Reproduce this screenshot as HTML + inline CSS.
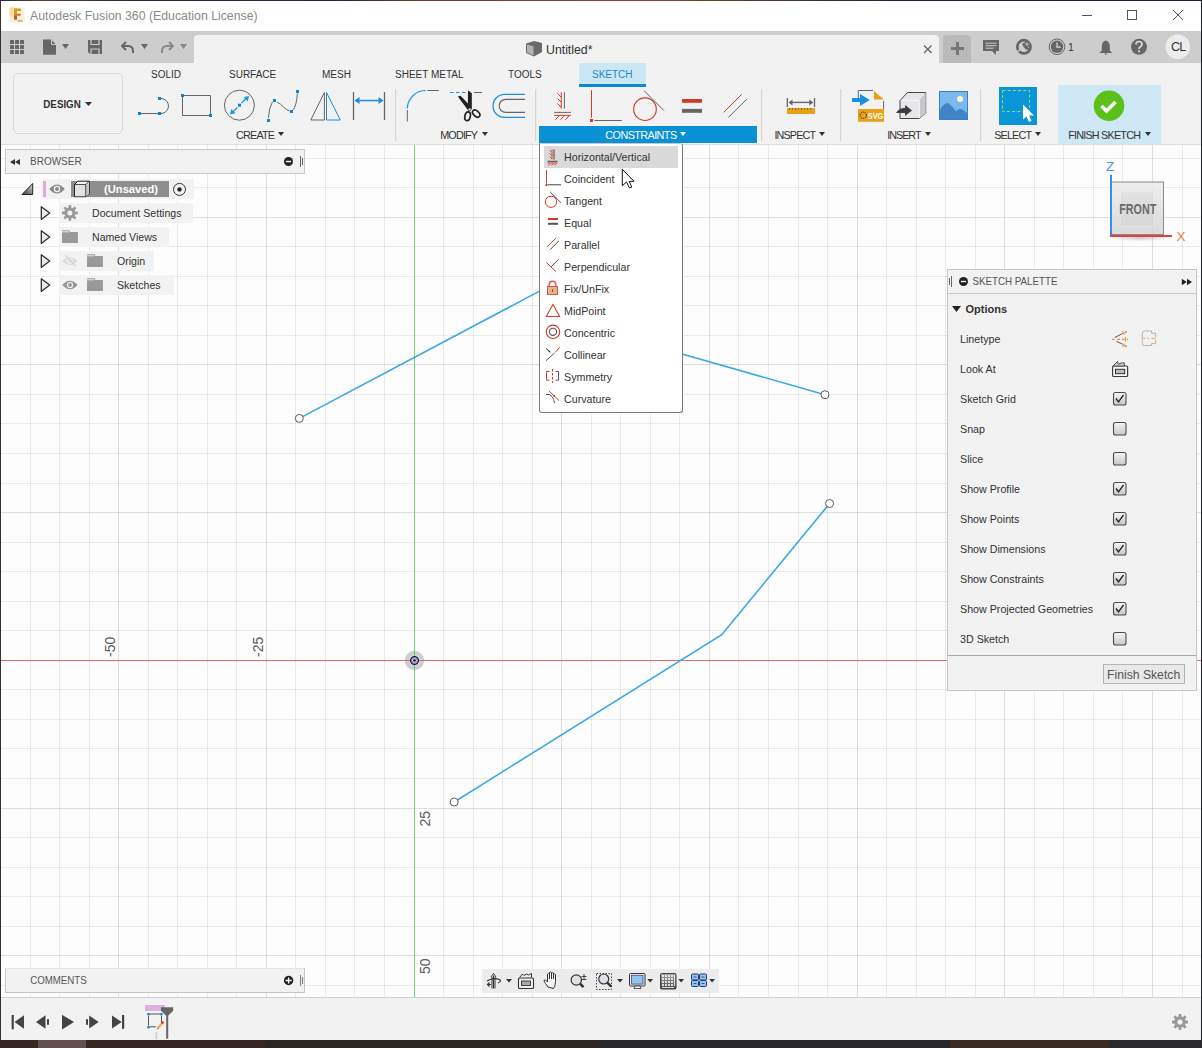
<!DOCTYPE html>
<html><head><meta charset="utf-8">
<style>
*{box-sizing:border-box;margin:0;padding:0}
html,body{width:1202px;height:1048px;overflow:hidden;background:#fff;font-family:"Liberation Sans",sans-serif;color:#333}
.a{position:absolute}
.t{position:absolute;white-space:nowrap;line-height:1}
svg{position:absolute;overflow:visible}
</style></head><body>
<!-- window edges -->
<div class="a" style="left:0;top:0;width:1202px;height:1048px;background:#fff"></div>
<div class="a" style="left:0;top:0;width:1202px;height:1px;background:linear-gradient(90deg,#1e2444 0%,#6a4030 3%,#2a2a40 10%,#1e2444 28%,#7a3a2a 35%,#8a4530 55%,#5a3a30 62%,#1e2040 75%,#1c1c38 100%)"></div>
<div class="a" style="left:0;top:0;width:1px;height:1048px;background:#3a2e28"></div>
<div class="a" style="left:1201px;top:0;width:1px;height:1048px;background:#1e1e30"></div>
<div class="a" style="left:0;top:1040px;width:1202px;height:8px;background:#2e2420"></div>
<div class="a" style="left:38px;top:1040px;width:20px;height:8px;background:#5a4a48"></div>

<!-- title bar -->
<div id="title" class="a" style="left:1px;top:1px;width:1200px;height:30px;background:#fff"></div>
<div class="t" style="left:30px;top:10px;font-size:12.3px;color:#8a8a8a">Autodesk Fusion 360 (Education License)</div>

<!-- tab bar -->
<div class="a" style="left:1px;top:31px;width:1200px;height:32px;background:#cdcdcd"></div>
<div class="a" style="left:194px;top:35px;width:745px;height:28px;background:#f2f2f2;border-radius:4px 4px 0 0"></div>
<div class="a" style="left:943px;top:35px;width:28px;height:28px;background:#b9b9b9;border-radius:4px 4px 0 0"></div>
<div class="t" style="left:546px;top:44px;font-size:12.3px;color:#333">Untitled*</div>
<svg style="left:0;top:0" width="1202" height="64" viewBox="0 0 1202 64">
 <!-- title logo -->
 <rect x="9.5" y="7.5" width="15" height="15" fill="#f8f0da"/>
 <rect x="9.5" y="7.5" width="4" height="9" fill="#f6dba6"/>
 <rect x="14" y="8.5" width="3" height="11" fill="#e0922c"/>
 <rect x="14" y="15.5" width="3" height="4" fill="#c05a30"/>
 <path d="M14 8.5 h6 q1.2 0 1.2 1.3 q0 1.2 -1.2 1.2 h-6z" fill="#e39a26"/>
 <rect x="17" y="13.8" width="3.6" height="1.8" fill="#c8602e"/>
 <rect x="17.5" y="19.8" width="5" height="2" fill="#eeb070"/>
 <!-- window controls -->
 <g stroke="#555" stroke-width="1" fill="none" shape-rendering="crispEdges">
  <path d="M1082 15.5 h10"/>
  <rect x="1127.5" y="10.5" width="9" height="9"/>
 </g>
 <path d="M1173 10 l10 10 M1183 10 l-10 10" stroke="#555" stroke-width="1"/>
 <!-- grid icon -->
 <g fill="#666">
  <rect x="10" y="40" width="4" height="4" rx=".6"/><rect x="15" y="40" width="4" height="4" rx=".6"/><rect x="20" y="40" width="4" height="4" rx=".6"/>
  <rect x="10" y="45" width="4" height="4" rx=".6"/><rect x="15" y="45" width="4" height="4" rx=".6"/><rect x="20" y="45" width="4" height="4" rx=".6"/>
  <rect x="10" y="50" width="4" height="4" rx=".6"/><rect x="15" y="50" width="4" height="4" rx=".6"/><rect x="20" y="50" width="4" height="4" rx=".6"/>
 </g>
 <!-- file -->
 <path d="M43 39.5 h8 l5 5 v10.2 h-13z" fill="#666"/>
 <path d="M51.5 39.5 v5 h4.5" fill="none" stroke="#cdcdcd" stroke-width="1"/>
 <path d="M62 44 h7 l-3.5 5z" fill="#666"/>
 <!-- save -->
 <path d="M88 40 h14 v14 h-12 l-2 -2z" fill="#666"/>
 <path d="M91 40 v4.5 h8 v-4.5 M91 54 v-5 h8 v5" fill="none" stroke="#cdcdcd" stroke-width="1.2"/>
 <!-- undo -->
 <path d="M133 53 v-2 q0 -5 -5 -5 h-5.5 M126 42 l-4 4 l4 4" fill="none" stroke="#666" stroke-width="2"/>
 <path d="M141 44 h7 l-3.5 5z" fill="#666"/>
 <!-- redo -->
 <path d="M162 53 v-2 q0 -5 5 -5 h5.5 M169 42 l4 4 l-4 4" fill="none" stroke="#888" stroke-width="2"/>
 <path d="M180 44 h7 l-3.5 5z" fill="#888"/>
 <!-- doc tab cube -->
 <path d="M526 43.5 l8 -2.5 l8 2 v9 l-8 4.5 l-8 -3.5z" fill="#6a6a6a"/>
 <path d="M527 44.5 l6.5 2 v9 l-6.5 -3z" fill="#b4b4b8"/>
 <!-- close x -->
 <path d="M924 45.5 l7.5 7.5 M931.5 45.5 l-7.5 7.5" stroke="#666" stroke-width="1.3"/>
 <!-- plus -->
 <path d="M951 48.5 h13 M957.5 42 v13" stroke="#777" stroke-width="3"/>
 <!-- comment -->
 <path d="M983 40 h16 v11 h-3 v4 l-4 -4 h-9z" fill="#666"/>
 <path d="M985.5 43.2 h11 M985.5 45.7 h11 M985.5 48.2 h8" stroke="#cdcdcd" stroke-width="1"/>
 <!-- sync -->
 <circle cx="1023.9" cy="46.8" r="6.6" fill="none" stroke="#666" stroke-width="2.7"/>
 <path d="M1022.8 43.6 l2.4 2.4 l-0.6 0.6 l1.6 1.6 l0.6 -0.6 l2.2 2.2" fill="none" stroke="#666" stroke-width="2.2"/>
 <path d="M1024.6 44 l2.8 -2.8 M1027 46.6 l2.8 -2.8" stroke="#666" stroke-width="2.2"/>
 <path d="M1025.3 44.2 l2.2 -2.2 M1027.2 46.2 l2.2 -2.2" stroke="#cdcdcd" stroke-width=".7"/>
 <path d="M1016.5 52.3 l4 -3.2" stroke="#cdcdcd" stroke-width="1.4"/>
 <!-- clock -->
 <circle cx="1057" cy="46.8" r="7.8" fill="none" stroke="#666" stroke-width="1"/>
 <circle cx="1057" cy="46.8" r="6.2" fill="#666"/>
 <path d="M1057 42.5 v4.6 h3.6" fill="none" stroke="#e0e0e0" stroke-width="1.2"/>
 <!-- bell -->
 <path d="M1105.8 39 v1.5 q-4 1 -4 6 v4 l-2.5 2.5 h13 l-2.5 -2.5 v-4 q0 -5 -4 -6z M1104 53.5 h3.6 l-1.8 1.5z" fill="#666"/>
 <!-- help -->
 <circle cx="1139" cy="46.8" r="8" fill="#666"/>
 <path d="M1136 44.5 q0 -3 3 -3 q3 0 3 2.8 q0 1.6 -1.6 2.4 q-1.4 .8 -1.4 2.4" fill="none" stroke="#ddd" stroke-width="1.7"/>
 <rect x="1138.1" y="50.3" width="1.8" height="1.9" fill="#ddd"/>
 <!-- avatar -->
 <circle cx="1177.8" cy="46.8" r="12.3" fill="#ececec"/>
</svg>
<div class="t" style="left:1068px;top:42px;font-size:10.5px;color:#333">1</div>
<div class="t" style="left:1171px;top:41px;font-size:12.5px;color:#333;letter-spacing:-0.8px">CL</div>

<!-- toolbar -->
<div class="a" style="left:1px;top:63px;width:1200px;height:82px;background:#f2f2f2"></div>
<div class="a" style="left:1px;top:144px;width:1200px;height:1px;background:#dedede"></div>
<div class="a" style="left:13px;top:73px;width:110px;height:61px;border:1px solid #d9d9d9;border-radius:5px;background:#f2f2f2"></div>

<!-- tabs -->
<div class="a" style="left:579px;top:63px;width:67px;height:24px;background:#cde6f4"></div>
<div class="a" style="left:579px;top:84px;width:67px;height:3px;background:#0a8ad6"></div>
<div class="t" style="left:151px;top:70px;font-size:10px;color:#333">SOLID</div>
<div class="t" style="left:229px;top:70px;font-size:10px;color:#333">SURFACE</div>
<div class="t" style="left:322px;top:70px;font-size:10px;color:#333">MESH</div>
<div class="t" style="left:395px;top:70px;font-size:10px;color:#333">SHEET METAL</div>
<div class="t" style="left:508px;top:70px;font-size:10px;color:#333">TOOLS</div>
<div class="t" style="left:592px;top:70px;font-size:10px;color:#1a86cc">SKETCH</div>
<!-- group labels -->
<div class="a" style="left:539px;top:126px;width:218px;height:17px;background:#0a90d4"></div>
<div class="a" style="left:1058px;top:85px;width:103px;height:59px;background:#cfe8f5"></div>







<svg style="left:0;top:60px" width="1202" height="90" viewBox="0 60 1202 90">
 <!-- dropdown arrows -->
 <g fill="#333">
  <path d="M85 102 h7 l-3.5 4z"/>
  <path d="M278 132 h6 l-3 4z"/>
  <path d="M482 132 h6 l-3 4z"/>
  <path d="M819 132 h6 l-3 4z"/>
  <path d="M925 132 h6 l-3 4z"/>
  <path d="M1035 132 h6 l-3 4z"/>
  <path d="M1145 132 h6 l-3 4z"/>
 </g>
 <path d="M680 132 h6 l-3 4z" fill="#fff"/>
 <!-- separators -->
 <g fill="#d6d6d6">
  <rect x="395" y="89" width="1.2" height="52"/>
  <rect x="535" y="89" width="1.2" height="52"/>
  <rect x="761" y="89" width="1.2" height="52"/>
  <rect x="840" y="89" width="1.2" height="52"/>
  <rect x="980" y="89" width="1.2" height="52"/>
 </g>
 <!-- CREATE: line -->
 <g fill="none" stroke="#666" stroke-width="1">
  <path d="M141 113.5 h17"/>
  <path d="M161 98.5 a7.5 7.5 0 0 1 0 15"/>
  <path d="M182.5 96 v19.5 h27 M183 95.5 h27.5 v19"/>
  <circle cx="239.4" cy="105.2" r="15"/>
  <path d="M268.4 118 q0.5 -10 4 -16 M277 102 q4 2 6.5 5 q3 3 6 4 M293 110 q3.5 -4 4.4 -16.5"/>
  <path d="M324.4 92.5 L310.8 120 H324.4z"/>
  <path d="M353.5 92 v28 M384.5 92 v28" stroke-width="1.3"/>
 </g>
 <g fill="#0a84d8">
  <rect x="138" y="112" width="3" height="3"/><rect x="158" y="112" width="3" height="3"/><rect x="158" y="97" width="3" height="3"/>
  <rect x="181" y="94" width="3" height="3"/><rect x="209" y="114" width="3" height="3"/>
  <rect x="238" y="103.7" width="3" height="3"/>
  <rect x="267" y="119" width="3" height="3"/><rect x="273" y="99" width="3" height="3"/><rect x="290" y="110" width="3" height="3"/><rect x="296" y="90" width="3" height="3"/>
 </g>
 <g stroke="#1a9ae0" stroke-width="1.4" fill="#1a9ae0">
  <path d="M241.5 103 l6 -6 M237.3 107.4 l-6 6" fill="none"/>
  <path d="M249 96 l-5.5 1.2 l4.3 4.3z M230 114.5 l5.5 -1.2 l-4.3 -4.3z" stroke="none"/>
 </g>
 <path d="M326.5 92.5 V120 H340.3z" fill="none" stroke="#1a8ee0" stroke-width="1"/>
 <g fill="#1a8ee0">
  <rect x="356" y="99.8" width="26" height="1.5"/>
  <path d="M354.5 100.5 l5 -3.5 v7z M383.5 100.5 l-5 -3.5 v7z"/>
 </g>
 <!-- MODIFY: fillet -->
 <path d="M407.3 110 v11.5 M427.3 90.5 h11.5" stroke="#666" stroke-width="1" fill="none"/>
 <path d="M407.3 108.5 A18.5 18.5 0 0 1 425.8 90.5" stroke="#1a9ae0" stroke-width="1.2" fill="none"/>
 <!-- trim -->
 <path d="M450 92.5 h16" stroke="#1a8ee0" stroke-width="1.2" stroke-dasharray="3.5 2.5" fill="none"/>
 <path d="M474 92.5 h8" stroke="#666" stroke-width="1" fill="none"/>
 <g fill="#222">
  <path d="M468 90.3 L471.8 93.2 V108.8 L470 111.5 L467.8 109.5z"/>
  <path d="M457.8 96.6 L460.6 95.8 L471 106.8 L469.6 111.2 L468 110.2z"/>
 </g>
 <circle cx="469.6" cy="109.4" r="1.1" fill="#f2f2f2"/>
 <g fill="none" stroke="#222" stroke-width="1.7">
  <ellipse cx="467.6" cy="116.3" rx="2.7" ry="4.5" transform="rotate(12 467.6 116.3)"/>
  <ellipse cx="476.2" cy="113.6" rx="2.6" ry="4.3" transform="rotate(-48 476.2 113.6)"/>
 </g>
 <!-- offset -->
 <path d="M525 94.4 h-20.5 a11.5 11.5 0 0 0 0 23 h20.5" stroke="#1a8ee0" stroke-width="1.3" fill="none"/>
 <path d="M525 99.3 h-19.3 a6.55 6.55 0 0 0 0 13.1 h19.3" stroke="#666" stroke-width="1.2" fill="none"/>
 <!-- CONSTRAINTS: H/V -->
 <path d="M564.4 92.3 v16.4 M554.1 112.4 h16.8" stroke="#666" stroke-width="1" fill="none"/>
 <g stroke="#d03a2a" stroke-width="1" fill="none">
  <path d="M561.3 92.3 v16.4 M557.5 93.5 l3.5 3.5 M557.5 98.5 l3.5 3.5 M557.5 103.5 l3.5 3.5"/>
  <path d="M554.1 115.4 h16.8 M559 115.8 l-3.5 4 M564 115.8 l-3.5 4 M569 115.8 l-3.5 4"/>
 </g>
 <!-- coincident -->
 <path d="M591.5 90.2 v27.6" stroke="#d03a2a" stroke-width="1" fill="none"/>
 <rect x="590" y="119" width="3" height="3" fill="#d03a2a"/>
 <path d="M594.3 120.5 h27.6" stroke="#666" stroke-width="1" fill="none"/>
 <!-- tangent -->
 <circle cx="645" cy="109.2" r="11.3" fill="none" stroke="#d03a2a" stroke-width="1.1"/>
 <path d="M644.2 90.8 L663.9 110.5" stroke="#666" stroke-width="1" fill="none"/>
 <!-- equal -->
 <rect x="682" y="99" width="20" height="3.8" fill="#d03a2a"/>
 <rect x="682" y="108.9" width="20" height="3.9" fill="#666"/>
 <!-- parallel -->
 <path d="M723.6 112.4 L741.7 94.3" stroke="#d03a2a" stroke-width="1" fill="none"/>
 <path d="M728.4 117.4 L746.7 99.3" stroke="#666" stroke-width="1" fill="none"/>
 <!-- INSPECT -->
 <path d="M787.3 98 v9 M814.5 98 v9" stroke="#666" stroke-width="1.3" fill="none"/>
 <rect x="790" y="101.7" width="22" height="1.4" fill="#666"/>
 <path d="M788.5 102.4 l4 -3 v6z M813.3 102.4 l-4 -3 v6z" fill="#666"/>
 <rect x="787" y="108" width="28" height="6" fill="#e8a218"/>
 <path d="M789.5 108 v2 M792.5 108 v1.5 M795.5 108 v2 M798.5 108 v1.5 M801.5 108 v2 M804.5 108 v1.5 M807.5 108 v2 M810.5 108 v1.5" stroke="#555" stroke-width="0.8"/>
 <!-- INSERT svg -->
 <path d="M858.3 101 V90.5 H873 M883.6 101 v8" stroke="#666" stroke-width="1" fill="none"/>
 <rect x="858.8" y="91" width="24.5" height="18" fill="#f2f2f2" opacity="0"/>
 <path d="M874 91 L884 99.5 H874z" fill="#e8a218"/>
 <rect x="858" y="109" width="26" height="12.8" fill="#e8a218"/>
 <circle cx="863.3" cy="115.3" r="3.2" fill="none" stroke="#222" stroke-width="1" stroke-dasharray="1.2 0.8"/>
 <text x="867.8" y="119.3" font-family="Liberation Sans" font-weight="700" font-size="8.5" fill="#fff" textLength="15.5" lengthAdjust="spacingAndGlyphs">SVG</text>
 <rect x="852" y="98" width="9" height="4" fill="#1a8ee0"/>
 <path d="M860 94 L869.7 100 L860 106z" fill="#1a8ee0"/>
 <!-- insert 3d -->
 <path d="M900 100.5 L907.5 92.5 H925.7 V113 L919.3 118.5 H900z" fill="#e6e6e8" stroke="#444" stroke-width="1"/>
 <path d="M919.3 100.3 L925.7 92.5 V113 L919.3 118.5z" fill="#c8c8cc"/>
 <path d="M901 100.3 H919.3 V118" fill="none" stroke="#fff" stroke-width="0.8"/>
 <path d="M896 113 q3 -5 9 -5 v-3 l7 5.5 l-7 5.5 v-3 q-5 0 -9 0z" fill="#3a3d42"/>
 <!-- image -->
 <rect x="939.5" y="91.5" width="28" height="28" fill="#7ab8f0" stroke="#3a80c0" stroke-width="1"/>
 <circle cx="960" cy="99" r="3" fill="#fdf8d0"/>
 <path d="M940 110 Q943 104 947.5 103 Q951 104 956 111.5 Q959 108 962.5 109.5 L967 113 V119 H940z" fill="#3f85c5"/>
 <!-- select -->
 <rect x="999" y="87" width="38" height="38" fill="#0a95d8"/>
 <rect x="1002.5" y="90.5" width="27" height="21" fill="none" stroke="#8ee070" stroke-width="1" stroke-dasharray="3 2.2"/>
 <path d="M1023 104.5 v15 l3.5 -3 l2.5 5.5 l2.5 -1 l-2.5 -5.5 h5z" fill="#fff"/>
 <!-- finish check -->
 <circle cx="1109" cy="105.7" r="15.3" fill="#5cc01a"/>
 <path d="M1101.5 106 l5 5 l9 -9" fill="none" stroke="#fff" stroke-width="3.6"/>
</svg>

<!-- canvas -->
<div id="canvas" class="a" style="left:1px;top:145px;width:1200px;height:852px;background:#fdfdfd;overflow:hidden"></div>
<!--GRID-->
<svg class="a" style="left:0;top:0" width="1202" height="1048" viewBox="0 0 1202 1048">
<g fill="#000" shape-rendering="crispEdges">
<rect x="30" y="145" width="1" height="852" fill-opacity="0.075"/>
<rect x="59" y="145" width="1" height="852" fill-opacity="0.075"/>
<rect x="89" y="145" width="1" height="852" fill-opacity="0.075"/>
<rect x="118" y="145" width="1" height="852" fill-opacity="0.12"/>
<rect x="148" y="145" width="1" height="852" fill-opacity="0.075"/>
<rect x="177" y="145" width="1" height="852" fill-opacity="0.075"/>
<rect x="207" y="145" width="1" height="852" fill-opacity="0.075"/>
<rect x="236" y="145" width="1" height="852" fill-opacity="0.075"/>
<rect x="266" y="145" width="1" height="852" fill-opacity="0.12"/>
<rect x="295" y="145" width="1" height="852" fill-opacity="0.075"/>
<rect x="325" y="145" width="1" height="852" fill-opacity="0.075"/>
<rect x="354" y="145" width="1" height="852" fill-opacity="0.075"/>
<rect x="384" y="145" width="1" height="852" fill-opacity="0.075"/>
<rect x="443" y="145" width="1" height="852" fill-opacity="0.075"/>
<rect x="473" y="145" width="1" height="852" fill-opacity="0.075"/>
<rect x="502" y="145" width="1" height="852" fill-opacity="0.075"/>
<rect x="532" y="145" width="1" height="852" fill-opacity="0.075"/>
<rect x="561" y="145" width="1" height="852" fill-opacity="0.12"/>
<rect x="591" y="145" width="1" height="852" fill-opacity="0.075"/>
<rect x="620" y="145" width="1" height="852" fill-opacity="0.075"/>
<rect x="650" y="145" width="1" height="852" fill-opacity="0.075"/>
<rect x="679" y="145" width="1" height="852" fill-opacity="0.075"/>
<rect x="709" y="145" width="1" height="852" fill-opacity="0.12"/>
<rect x="738" y="145" width="1" height="852" fill-opacity="0.075"/>
<rect x="768" y="145" width="1" height="852" fill-opacity="0.075"/>
<rect x="798" y="145" width="1" height="852" fill-opacity="0.075"/>
<rect x="827" y="145" width="1" height="852" fill-opacity="0.075"/>
<rect x="857" y="145" width="1" height="852" fill-opacity="0.12"/>
<rect x="886" y="145" width="1" height="852" fill-opacity="0.075"/>
<rect x="916" y="145" width="1" height="852" fill-opacity="0.075"/>
<rect x="945" y="145" width="1" height="852" fill-opacity="0.075"/>
<rect x="975" y="145" width="1" height="852" fill-opacity="0.075"/>
<rect x="1004" y="145" width="1" height="852" fill-opacity="0.12"/>
<rect x="1034" y="145" width="1" height="852" fill-opacity="0.075"/>
<rect x="1063" y="145" width="1" height="852" fill-opacity="0.075"/>
<rect x="1093" y="145" width="1" height="852" fill-opacity="0.075"/>
<rect x="1122" y="145" width="1" height="852" fill-opacity="0.075"/>
<rect x="1152" y="145" width="1" height="852" fill-opacity="0.12"/>
<rect x="1182" y="145" width="1" height="852" fill-opacity="0.075"/>
<rect x="1" y="158" width="1200" height="1" fill-opacity="0.075"/>
<rect x="1" y="187" width="1200" height="1" fill-opacity="0.075"/>
<rect x="1" y="217" width="1200" height="1" fill-opacity="0.12"/>
<rect x="1" y="246" width="1200" height="1" fill-opacity="0.075"/>
<rect x="1" y="276" width="1200" height="1" fill-opacity="0.075"/>
<rect x="1" y="305" width="1200" height="1" fill-opacity="0.075"/>
<rect x="1" y="335" width="1200" height="1" fill-opacity="0.075"/>
<rect x="1" y="364" width="1200" height="1" fill-opacity="0.12"/>
<rect x="1" y="394" width="1200" height="1" fill-opacity="0.075"/>
<rect x="1" y="423" width="1200" height="1" fill-opacity="0.075"/>
<rect x="1" y="453" width="1200" height="1" fill-opacity="0.075"/>
<rect x="1" y="483" width="1200" height="1" fill-opacity="0.075"/>
<rect x="1" y="512" width="1200" height="1" fill-opacity="0.12"/>
<rect x="1" y="542" width="1200" height="1" fill-opacity="0.075"/>
<rect x="1" y="571" width="1200" height="1" fill-opacity="0.075"/>
<rect x="1" y="601" width="1200" height="1" fill-opacity="0.075"/>
<rect x="1" y="630" width="1200" height="1" fill-opacity="0.075"/>
<rect x="1" y="689" width="1200" height="1" fill-opacity="0.075"/>
<rect x="1" y="719" width="1200" height="1" fill-opacity="0.075"/>
<rect x="1" y="748" width="1200" height="1" fill-opacity="0.075"/>
<rect x="1" y="778" width="1200" height="1" fill-opacity="0.075"/>
<rect x="1" y="808" width="1200" height="1" fill-opacity="0.12"/>
<rect x="1" y="837" width="1200" height="1" fill-opacity="0.075"/>
<rect x="1" y="867" width="1200" height="1" fill-opacity="0.075"/>
<rect x="1" y="896" width="1200" height="1" fill-opacity="0.075"/>
<rect x="1" y="926" width="1200" height="1" fill-opacity="0.075"/>
<rect x="1" y="955" width="1200" height="1" fill-opacity="0.12"/>
<rect x="1" y="985" width="1200" height="1" fill-opacity="0.075"/>
</g>
<rect x="1" y="660" width="1200" height="1" fill="#e26a6a" shape-rendering="crispEdges"/>
<rect x="414" y="145" width="1" height="852" fill="#6fd86f" shape-rendering="crispEdges"/>
<g fill="none" stroke="#3aa8e4" stroke-width="1.6" stroke-linecap="round">
<polyline points="299.3,418.4 539,291.4 600,259"/>
<polyline points="640,342 825,394.7"/>
<polyline points="454.2,802 721.8,634.7 829.6,503.5"/>
</g>
<g fill="#fff" stroke="#5a5a5a" stroke-width="1">
<circle cx="299.3" cy="418.4" r="4"/>
<circle cx="825" cy="394.7" r="4"/>
<circle cx="454.2" cy="802" r="4"/>
<circle cx="829.6" cy="503.5" r="4"/>
</g>
<circle cx="414.5" cy="660.5" r="7.4" fill="none" stroke="#8a8a96" stroke-opacity=".42" stroke-width="4.6"/>
<circle cx="414.5" cy="660.5" r="3.9" fill="#d8dcf0" stroke="#111" stroke-width="1.3"/>
<circle cx="414.5" cy="660.5" r="2.8" fill="none" stroke="#5868d0" stroke-width=".9"/>
<circle cx="414.5" cy="660.5" r="1.3" fill="#111"/>
<g font-family="Liberation Sans" font-size="14" fill="#5a5a5a">
<text transform="translate(115,657) rotate(-90)">-50</text>
<text transform="translate(262.5,657) rotate(-90)">-25</text>
<text transform="translate(429.5,826.5) rotate(-90)">25</text>
<text transform="translate(429.5,974) rotate(-90)">50</text>
</g>
</svg>

<!--/GRID-->

<!-- browser -->
<div class="a" style="left:5px;top:149px;width:300px;height:25px;background:#f2f2f2;border:1px solid #c9c9c9"></div>
<div class="t" style="left:30px;top:157px;font-size:10px;color:#555">BROWSER</div>
<div class="a" style="left:41px;top:179px;width:153px;height:20px;background:#f2f2f2"></div>
<div class="a" style="left:71px;top:181px;width:98px;height:16px;background:#8e8e8e"></div>
<div class="a" style="left:43px;top:181px;width:3px;height:16px;background:#dcaee0"></div>
<div class="t" style="left:104px;top:183.5px;font-size:11.2px;font-weight:700;color:#fff">(Unsaved)</div>
<div class="a" style="left:59px;top:203px;width:134px;height:20px;background:#f2f2f2"></div>
<div class="a" style="left:59px;top:227px;width:110px;height:20px;background:#f2f2f2"></div>
<div class="a" style="left:59px;top:251px;width:95px;height:20px;background:#f2f2f2"></div>
<div class="a" style="left:59px;top:275px;width:115px;height:20px;background:#f2f2f2"></div>
<div class="t" style="left:92px;top:208px;font-size:10.6px;color:#333">Document Settings</div>
<div class="t" style="left:92px;top:232px;font-size:10.6px;color:#333">Named Views</div>
<div class="t" style="left:117px;top:256px;font-size:10.6px;color:#333">Origin</div>
<div class="t" style="left:117px;top:280px;font-size:10.6px;color:#333">Sketches</div>
<svg style="left:0;top:145px" width="320" height="160" viewBox="0 145 320 160">
 <path d="M10 162 l5 -3 v6z M15 162 l5 -3 v6z" fill="#333"/>
 <circle cx="288.5" cy="161.5" r="4.5" fill="#222"/>
 <rect x="285.9" y="160.8" width="5.2" height="1.4" fill="#fff"/>
 <path d="M300.5 156 v11 M302.5 158 v7" stroke="#555" stroke-width=".9"/>
 <defs><linearGradient id="tg" x1="0" y1="1" x2="1" y2="0"><stop offset="0" stop-color="#333"/><stop offset="1" stop-color="#ddd"/></linearGradient></defs>
 <path d="M22 194.5 L32.7 183.5 V194.5z" fill="url(#tg)" stroke="#222" stroke-width="1"/>
 <!-- eye row1 -->
 <path d="M49.2 189 q7.8 -9 15.6 0 q-7.8 9 -15.6 0z" fill="#8a8a8a"/>
 <circle cx="57" cy="189" r="2.6" fill="none" stroke="#f2f2f2" stroke-width="1.2"/>
 <!-- cube -->
 <path d="M74.5 184.5 l3.3 -3.3 h11.5 v12.5 l-3.3 3 h-11.5z" fill="#f6f6f6" stroke="#222" stroke-width="1"/>
 <path d="M75.3 185 h10.2 v11.2 h-10.2z" fill="#dfe2e6"/>
 <path d="M86 184.5 l3 -3 v12.2 l-3 3z" fill="#c4c6ca"/>
 <path d="M74.5 184.5 h11.2 l3.3 -3.3 M85.7 184.5 v12" fill="none" stroke="#222" stroke-width=".8"/>
 <!-- radio -->
 <circle cx="179.5" cy="189.4" r="6" fill="none" stroke="#333" stroke-width="1"/>
 <circle cx="179.5" cy="189.4" r="2.2" fill="#222"/>
 <!-- expand triangles -->
 <g fill="#e6e6e6" stroke="#333" stroke-width="1.3" stroke-linejoin="round">
  <path d="M41.3 206.7 L49.7 213 L41.3 219.4z"/>
  <path d="M41.3 230.7 L49.7 237 L41.3 243.4z"/>
  <path d="M41.3 254.7 L49.7 261 L41.3 267.4z"/>
  <path d="M41.3 278.7 L49.7 285 L41.3 291.4z"/>
 </g>
 <!-- gear -->
 <g fill="#999">
  <circle cx="69.9" cy="212.9" r="5.6"/>
  <g stroke="#999" stroke-width="2.6">
   <path d="M69.9 205 v15.8 M62 212.9 h15.8 M64.3 207.3 l11.2 11.2 M75.5 207.3 l-11.2 11.2"/>
  </g>
 </g>
 <circle cx="69.9" cy="212.9" r="2.5" fill="#f2f2f2"/>
 <!-- folders -->
 <g fill="#999">
  <path d="M62 230.3 h7.5 l1 1.7 h7.4 v11.1 h-15.9z"/>
  <path d="M87 254.3 h7.5 l1 1.7 h7.4 v11.1 h-15.9z"/>
  <path d="M87 278.3 h7.5 l1 1.7 h7.4 v11.1 h-15.9z"/>
 </g>
 <g stroke="#f2f2f2" stroke-width=".9"><path d="M62 231.8 h7.3 M87 255.8 h7.3 M87 279.8 h7.3"/></g>
 <!-- hidden eye -->
 <path d="M62.2 261 q7.8 -8 15.6 0 q-7.8 8 -15.6 0z" fill="#dcdcdc"/>
 <circle cx="70" cy="261" r="2.3" fill="none" stroke="#f2f2f2" stroke-width="1.1"/>
 <path d="M65 255 l11 11.5" stroke="#d4d4d4" stroke-width="1.2"/>
 <!-- eye sketches -->
 <path d="M62.2 285 q7.8 -8.5 15.6 0 q-7.8 8.5 -15.6 0z" fill="#999"/>
 <circle cx="70" cy="285" r="2.5" fill="none" stroke="#f2f2f2" stroke-width="1.2"/>
</svg>

<!-- constraints menu -->
<div class="a" style="left:539px;top:143px;width:144px;height:270px;background:#fff;border:1px solid #7a7a7a;border-top-color:#c8c8c8;border-radius:0 3px 3px 3px"></div>
<div class="a" style="left:544px;top:146px;width:134px;height:21.5px;background:#d9d9d9"></div>
<div class="t" style="left:564px;top:151.5px;font-size:10.7px;color:#333">Horizontal/Vertical</div>
<div class="t" style="left:564px;top:173.5px;font-size:10.7px;color:#333">Coincident</div>
<div class="t" style="left:564px;top:195.5px;font-size:10.7px;color:#333">Tangent</div>
<div class="t" style="left:564px;top:217.5px;font-size:10.7px;color:#333">Equal</div>
<div class="t" style="left:564px;top:239.5px;font-size:10.7px;color:#333">Parallel</div>
<div class="t" style="left:564px;top:261.5px;font-size:10.7px;color:#333">Perpendicular</div>
<div class="t" style="left:564px;top:283.5px;font-size:10.7px;color:#333">Fix/UnFix</div>
<div class="t" style="left:564px;top:305.5px;font-size:10.7px;color:#333">MidPoint</div>
<div class="t" style="left:564px;top:327.5px;font-size:10.7px;color:#333">Concentric</div>
<div class="t" style="left:564px;top:349.5px;font-size:10.7px;color:#333">Collinear</div>
<div class="t" style="left:564px;top:371.5px;font-size:10.7px;color:#333">Symmetry</div>
<div class="t" style="left:564px;top:393.5px;font-size:10.7px;color:#333">Curvature</div>
<svg style="left:530px;top:140px" width="120" height="280" viewBox="530 140 120 280">
 <!-- HV -->
 <path d="M554 149.5 v10 M547.5 161.3 h10" stroke="#444" stroke-width="1" fill="none"/>
 <g stroke="#d03a2a" stroke-width=".9" fill="none">
  <path d="M552 149.5 v10 M549.5 150 l2.2 2.2 M549.5 153.3 l2.2 2.2 M549.5 156.6 l2.2 2.2"/>
  <path d="M547.5 163 h10 M550.5 163.3 l-2.2 2.2 M553.5 163.3 l-2.2 2.2 M556.5 163.3 l-2.2 2.2"/>
 </g>
 <!-- coincident -->
 <path d="M546.5 170 v13.5" stroke="#d03a2a" stroke-width="1" fill="none"/>
 <rect x="545.5" y="184" width="2" height="2" fill="#d03a2a"/>
 <path d="M548 184.8 h13" stroke="#444" stroke-width="1" fill="none"/>
 <!-- tangent -->
 <circle cx="551" cy="201.8" r="5.6" fill="none" stroke="#d03a2a" stroke-width="1"/>
 <path d="M550.2 192 L560.9 202.7" stroke="#555" stroke-width="1" fill="none"/>
 <!-- equal -->
 <rect x="548" y="218" width="10" height="2" fill="#d03a2a"/>
 <rect x="548" y="222.8" width="10" height="2" fill="#555"/>
 <!-- parallel -->
 <path d="M547.2 246.7 L555.9 238.2" stroke="#d03a2a" stroke-width="1" fill="none"/>
 <path d="M550.2 249.7 L558.7 241" stroke="#555" stroke-width="1" fill="none"/>
 <!-- perpendicular -->
 <path d="M546.3 262.4 L555.9 271.6" stroke="#d03a2a" stroke-width="1" fill="none"/>
 <path d="M551 266.9 L558.7 259.2" stroke="#555" stroke-width="1" fill="none"/>
 <!-- lock -->
 <path d="M549.2 286.5 v-2 a3.3 3.3 0 0 1 6.6 0 v2" stroke="#d9534a" stroke-width="1.4" fill="none"/>
 <rect x="547.5" y="286.5" width="10" height="8" fill="#e6b48a" stroke="#d9534a" stroke-width="1"/>
 <rect x="552" y="289" width="1" height="3" fill="#c04030"/>
 <!-- midpoint -->
 <path d="M546.3 316.5 L553 304.3 L559.6 316.5z" stroke="#d03a2a" stroke-width="1.1" fill="none"/>
 <!-- concentric -->
 <circle cx="553" cy="331.8" r="6.7" fill="none" stroke="#d03a2a" stroke-width="1.1"/>
 <circle cx="553" cy="331.8" r="3.6" fill="none" stroke="#555" stroke-width="1.1"/>
 <!-- collinear -->
 <path d="M546.1 360.6 L554.6 353" stroke="#555" stroke-width="1" fill="none"/>
 <path d="M555.5 352.2 L559.7 347.2" stroke="#d03a2a" stroke-width="1" fill="none"/>
 <path d="M546 348.5 l3.5 3" stroke="#333" stroke-width="1" fill="none"/>
 <path d="M550.5 352.5 l-2.5 -.4 l1.8 -1.8z" fill="#333"/>
 <!-- symmetry -->
 <path d="M549.6 371.4 h-3 v8.8 h3" stroke="#d03a2a" stroke-width="1" fill="none"/>
 <path d="M552.5 369 v14" stroke="#d03a2a" stroke-width="1" stroke-dasharray="2.5 1.5" fill="none"/>
 <path d="M555.5 371.4 h3 v8.8 h-3" stroke="#555" stroke-width="1" fill="none"/>
 <!-- curvature -->
 <path d="M549.1 391.1 L559.1 400.6" stroke="#d03a2a" stroke-width="1" fill="none"/>
 <path d="M546 394.5 q4 -1 6 2 q2 2.5 2.5 6.5" stroke="#555" stroke-width="1" fill="none"/>
 <circle cx="554" cy="395.8" r="1" fill="#d03a2a"/>
</svg>
<!-- sketch palette -->
<div class="a" style="left:947px;top:269px;width:250px;height:422px;background:#f2f2f2;border:1px solid #c6c6c6"></div>
<div class="a" style="left:948px;top:293px;width:248px;height:1px;background:#c8c8c8"></div>
<div class="a" style="left:948px;top:655px;width:248px;height:1px;background:#a8a8a8"></div>

<div class="t" style="left:965.5px;top:303.5px;font-size:11px;font-weight:700;color:#333">Options</div>
<div class="t" style="left:960px;top:334px;font-size:10.7px;color:#333">Linetype</div>
<div class="t" style="left:960px;top:364px;font-size:10.7px;color:#333">Look At</div>
<div class="t" style="left:960px;top:394px;font-size:10.7px;color:#333">Sketch Grid</div>
<div class="t" style="left:960px;top:424px;font-size:10.7px;color:#333">Snap</div>
<div class="t" style="left:960px;top:454px;font-size:10.7px;color:#333">Slice</div>
<div class="t" style="left:960px;top:484px;font-size:10.7px;color:#333">Show Profile</div>
<div class="t" style="left:960px;top:514px;font-size:10.7px;color:#333">Show Points</div>
<div class="t" style="left:960px;top:544px;font-size:10.7px;color:#333">Show Dimensions</div>
<div class="t" style="left:960px;top:574px;font-size:10.7px;color:#333">Show Constraints</div>
<div class="t" style="left:960px;top:604px;font-size:10.7px;color:#333">Show Projected Geometries</div>
<div class="t" style="left:960px;top:634px;font-size:10.7px;color:#333">3D Sketch</div>
<div class="a" style="left:1103px;top:664px;width:82px;height:20px;background:#e9e9e9;border:1px solid #b4b4b4"></div>
<div class="t" style="left:1107px;top:669px;font-size:12.2px;color:#555">Finish Sketch</div>
<svg style="left:940px;top:260px" width="262" height="440" viewBox="940 260 262 440">
 <defs><linearGradient id="cbg" x1="0" y1="0" x2="0" y2="1"><stop offset="0" stop-color="#f6f6f6"/><stop offset="1" stop-color="#c6c6c6"/></linearGradient></defs>
 <path d="M949.5 278 v7 M951.5 276 v11" stroke="#555" stroke-width=".9"/>
 <circle cx="963.5" cy="281.5" r="4.5" fill="#222"/>
 <rect x="960.9" y="280.8" width="5.2" height="1.4" fill="#fff"/>
 <path d="M1181.8 278.7 l5 3.3 l-5 3.3z M1187 278.7 l5 3.3 l-5 3.3z" fill="#222"/>
 <path d="M952 306 h9 l-4.5 6z" fill="#222"/>
 <!-- linetype icons -->
 <path d="M1114.8 337.5 L1122.6 333.5 M1116.5 341.3 L1122.5 344.2" stroke="#555" stroke-width="1" fill="none"/>
 <path d="M1112 339.4 h2.5 M1117 339.4 h3 M1122 339.4 h2.5 M1127 339.4 h1.2 M1125.5 337 v4.8" stroke="#e39a26" stroke-width="1.2" fill="none"/>
 <path d="M1122.5 331.3 l1.5 2.6 l1.6 -2.6 M1122.5 347 l1.5 -2.6 l1.6 2.6" stroke="#e39a26" stroke-width="1.1" fill="none"/>
 <path d="M1125.7 332.5 l1.2 -1 M1125.7 345.5 l1.2 1" stroke="#555" stroke-width="1" fill="none"/>
 <path d="M1144.5 331 h7 v2.2 h4.2 v10.4 h-4.2 v2 h-7 q-2.2 0 -2.2 -2.2 v-10.2 q0 -2.2 2.2 -2.2z" stroke="#b4b4b4" stroke-width="1" fill="none"/>
 <rect x="1141.5" y="337.2" width="16" height="2.4" fill="#f2f2f2"/>
 <path d="M1141.5 338.4 h3.8 M1147.5 338.4 h1.5 M1151.5 338.4 h3.8" stroke="#f0b060" stroke-width="1.1" fill="none"/>
 <!-- look at -->
 <rect x="1112.6" y="366" width="15" height="10.5" rx="1" fill="#fbfbfb" stroke="#3a3d42" stroke-width="1.2"/>
 <rect x="1115.5" y="369.3" width="9.2" height="4.4" fill="#b8bcbc" stroke="#2a3030" stroke-width="1"/>
 <path d="M1113 366 l4.6 -4.6 l0.5 2.8 q3 -1.4 6 -1.5 l0.4 3.3z" fill="#d0d2d2" stroke="#3a3d42" stroke-width=".9" stroke-linejoin="round"/>
 <!-- checkboxes -->
 <g fill="url(#cbg)" stroke="#4a4a4a" stroke-width="1.1">
  <rect x="1113.5" y="392.5" width="12.5" height="12.5" rx="2"/>
  <rect x="1113.5" y="422.5" width="12.5" height="12.5" rx="2"/>
  <rect x="1113.5" y="452.5" width="12.5" height="12.5" rx="2"/>
  <rect x="1113.5" y="482.5" width="12.5" height="12.5" rx="2"/>
  <rect x="1113.5" y="512.5" width="12.5" height="12.5" rx="2"/>
  <rect x="1113.5" y="542.5" width="12.5" height="12.5" rx="2"/>
  <rect x="1113.5" y="572.5" width="12.5" height="12.5" rx="2"/>
  <rect x="1113.5" y="602.5" width="12.5" height="12.5" rx="2"/>
  <rect x="1113.5" y="632.5" width="12.5" height="12.5" rx="2"/>
 </g>
 <g fill="none" stroke="#222" stroke-width="1.3">
  <path d="M1116 398.5 l2.5 3.5 l5 -7"/>
  <path d="M1116 488.5 l2.5 3.5 l5 -7"/>
  <path d="M1116 518.5 l2.5 3.5 l5 -7"/>
  <path d="M1116 548.5 l2.5 3.5 l5 -7"/>
  <path d="M1116 578.5 l2.5 3.5 l5 -7"/>
  <path d="M1116 608.5 l2.5 3.5 l5 -7"/>
 </g>
</svg>
<!-- cursor -->
<svg style="left:615px;top:165px" width="30" height="30" viewBox="615 165 30 30">
 <path d="M622.3 169.3 V185.8 L626.5 182 L629.5 188 L631.8 187 L629.2 181.5 L634 181.3z" fill="#fff" stroke="#111" stroke-width="1" stroke-linejoin="round"/>
</svg>

<!-- viewcube -->
<svg style="left:1090px;top:150px" width="110" height="100" viewBox="1090 150 110 100">
 <defs>
  <linearGradient id="vcg" x1="0" y1="0" x2="0" y2="1"><stop offset="0" stop-color="#ececec"/><stop offset="1" stop-color="#d6d6d6"/></linearGradient>
  <radialGradient id="shd" cx=".5" cy=".5" r=".5"><stop offset="0" stop-color="#000" stop-opacity=".22"/><stop offset="1" stop-color="#000" stop-opacity="0"/></radialGradient>
 </defs>
 <ellipse cx="1140" cy="237.5" rx="30" ry="4" fill="url(#shd)"/>
 <rect x="1111.5" y="182" width="52" height="52.5" fill="url(#vcg)" fill-opacity=".88" stroke="#8a8a8a" stroke-width="1"/>
 <rect x="1121" y="192" width="32" height="33" fill="#000" fill-opacity=".03"/>
 <text x="1119.3" y="214.3" font-family="Liberation Sans" font-weight="700" font-size="14" fill="#6a6a6a" textLength="37" lengthAdjust="spacingAndGlyphs">FRONT</text>
 <rect x="1110" y="174.7" width="2" height="61" fill="#3a8ee8"/>
 <rect x="1110" y="235" width="62" height="2" fill="#e04040"/>
 <text x="1106" y="170.5" font-family="Liberation Sans" font-size="13.5" fill="#4a98ee">Z</text>
 <text x="1176.5" y="240.5" font-family="Liberation Sans" font-size="13.5" fill="#e8804a">X</text>
</svg>

<!-- comments -->
<div class="a" style="left:5px;top:968px;width:300px;height:25px;background:#f2f2f2;border:1px solid #cccccc;border-top-color:#e4e4e4;border-right-color:#c4c4c4;border-bottom-color:#c4c4c4"></div>

<svg style="left:270px;top:965px" width="40" height="30" viewBox="270 965 40 30">
 <circle cx="288.6" cy="980.5" r="4.7" fill="#222"/>
 <path d="M285.6 980.5 h6 M288.6 977.5 v6" stroke="#fff" stroke-width="1.3"/>
 <path d="M300.6 975 v11 M302.6 977 v7" stroke="#555" stroke-width=".8"/>
</svg>

<!-- nav bar -->
<div class="a" style="left:482px;top:969px;width:237px;height:24px;background:#ececec"></div>
<svg style="left:480px;top:965px" width="245" height="32" viewBox="480 965 245 32">
 <g fill="#333">
  <path d="M506 979 h6 l-3 3.5z M617 979 h6 l-3 3.5z M647.3 979 h5.7 l-2.85 3.5z M678.3 979 h5.7 l-2.85 3.5z M709.2 979 h5.8 l-2.9 3.5z"/>
 </g>
 <!-- orbit -->
 <path d="M493.5 988.5 v-13 M491 977 l2.5 -3.5 l2.5 3.5 M492 988.5 v-12 M495 988.5 v-12" fill="#fff" stroke="#333" stroke-width="1"/>
 <path d="M487 981 q6 -4 12.5 -1.5 q2.5 1.5 -1.5 3.5" fill="none" stroke="#333" stroke-width="1.2"/>
 <path d="M491 984.5 h-3.5 M489.5 982.5 l-2 2 l2 2" fill="none" stroke="#333" stroke-width="1.2"/>
 <!-- look at -->
 <rect x="518.5" y="978" width="15" height="10.5" rx="1" fill="#f2f2f2" stroke="#333" stroke-width="1.1"/>
 <rect x="521.5" y="981" width="9" height="4.5" fill="#aaa" stroke="#333" stroke-width=".9"/>
 <path d="M519.5 977.5 l3 -3.5 l1.5 1.5 l2.5 -1.5 l2 1 l3 -1.5 v4" stroke="#333" stroke-width="1" fill="none"/>
 <!-- pan hand -->
 <path d="M548 987 q-3 -4 -4 -6 q0 -1.5 1.5 -1 l2 2 v-8 q1 -1.2 2 0 v5 v-6.5 q1 -1.2 2 0 v6.5 v-6 q1 -1.2 2 0 v6 v-4.5 q1 -1.2 2 0 v7 q0 4 -2 7z" fill="#f4f4f4" stroke="#333" stroke-width="1"/>
 <!-- zoom -->
 <circle cx="576.3" cy="980" r="5.2" fill="#dde2e8" stroke="#333" stroke-width="1.2"/>
 <path d="M580 983.7 l3.5 3.5" stroke="#333" stroke-width="2.4"/>
 <path d="M581.5 976.5 h5 M584 974 v5 M581.5 979.5 h5" stroke="#333" stroke-width=".9"/>
 <!-- zoom window -->
 <rect x="596.5" y="973.5" width="15" height="16" fill="none" stroke="#333" stroke-width=".9" stroke-dasharray="1.5 1.5"/>
 <circle cx="603.7" cy="979" r="5" fill="#dde2e8" stroke="#333" stroke-width="1.2"/>
 <path d="M607.3 982.6 l4 4" stroke="#333" stroke-width="2.4"/>
 <!-- display -->
 <rect x="629.5" y="973.5" width="15.5" height="12.5" rx="1" fill="#f2f2f2" stroke="#333" stroke-width="1"/>
 <rect x="631.5" y="975.3" width="11.5" height="8.8" fill="#8ec4ea" stroke="#3a4a8a" stroke-width=".8"/>
 <path d="M634 988.5 h7 l-1 -2.5 h-5z" fill="#f2f2f2" stroke="#333" stroke-width=".8"/>
 <!-- grid -->
 <defs><linearGradient id="gg" x1="0" y1="0" x2="0" y2="1"><stop offset="0" stop-color="#aaa"/><stop offset="1" stop-color="#444"/></linearGradient></defs>
 <rect x="660.5" y="973.5" width="15.5" height="15.5" rx="1" fill="url(#gg)" stroke="#444" stroke-width="1"/>
 <g fill="#f4f4f4"><path d="M662 975 h2 v2 h-2z M665 975 h2 v2 h-2z M668 975 h2 v2 h-2z M671 975 h2 v2 h-2z M662 978 h2 v2 h-2z M665 978 h2 v2 h-2z M668 978 h2 v2 h-2z M671 978 h2 v2 h-2z M662 981 h2 v2 h-2z M665 981 h2 v2 h-2z M668 981 h2 v2 h-2z M671 981 h2 v2 h-2z M662 984 h2 v2 h-2z M665 984 h2 v2 h-2z M668 984 h2 v2 h-2z M671 984 h2 v2 h-2z M674 975 h1 v11 h-1z M662 987 h12 v1 h-12z" opacity=".85"/></g>
 <!-- viewports -->
 <g fill="#8ec4ea" stroke="#2a3a7a" stroke-width="1">
  <rect x="691.5" y="974" width="7" height="6" rx="1"/><rect x="699.5" y="974" width="7" height="6" rx="1"/>
  <rect x="691.5" y="980.5" width="7" height="6" rx="1"/><rect x="699.5" y="980.5" width="7" height="6" rx="1"/>
 </g>
 <path d="M693.5 977 h3 M701.5 977 h3 M693.5 983.5 h3 M701.5 983.5 h3" stroke="#2a3a7a" stroke-width=".8"/>
</svg>

<!-- timeline -->
<div class="a" style="left:1px;top:997px;width:1200px;height:1px;background:#cfcfcf"></div>
<div class="a" style="left:1px;top:998px;width:1200px;height:42px;background:#f2f2f2"></div>
<svg style="left:0;top:998px" width="1202" height="50" viewBox="0 998 1202 50">
 <rect x="0" y="1040" width="1202" height="8" fill="#382622"/>
 <rect x="38" y="1040" width="48" height="8" fill="#645050"/>
 <rect x="265" y="1040" width="340" height="8" fill="#2c2626"/>
 <rect x="600" y="1040" width="350" height="8" fill="#28282a"/>
 <rect x="950" y="1040" width="160" height="8" fill="#3a2c24"/>
 <rect x="1110" y="1040" width="92" height="8" fill="#2a2a2c"/>
 <g fill="#444">
  <rect x="11.6" y="1015" width="2.2" height="14.3"/><path d="M24 1015.3 V1028.8 L14.5 1022z"/>
  <path d="M45.5 1015.3 V1028.8 L36 1022z"/><rect x="47" y="1019.2" width="2" height="5.6"/>
  <path d="M62 1014.8 V1029.5 L74 1022.1z"/>
  <rect x="86" y="1019.2" width="2" height="5.6"/><path d="M89.2 1015.5 L98.7 1022 L89.2 1028.4z"/>
  <path d="M112 1015.5 L121.7 1022 L112 1028.4z"/><rect x="122" y="1015" width="2.2" height="13.8"/>
 </g>
 <rect x="145" y="1005" width="20" height="6" fill="#dcb0e0"/>
 <path d="M149.5 1014 h10.5 M148.5 1016 v9.5 M150 1026.8 h6 M161.5 1016 v6" fill="none" stroke="#555" stroke-width="1"/>
 <g fill="#0a84d8"><rect x="147.3" y="1013" width="2.4" height="2.4"/><rect x="160.2" y="1013" width="2.4" height="2.4"/><rect x="147.3" y="1026" width="2.4" height="2.4"/></g>
 <path d="M157.8 1028 l4.6 -4.8" stroke="#e8b060" stroke-width="2.4"/>
 <path d="M156.5 1029.8 l1.6 -2.6 l1 1z" fill="#777"/>
 <circle cx="162.6" cy="1022.6" r="1.3" fill="#d03030"/>
 <rect x="155.5" y="1032" width="1.6" height="7" fill="#d0d0d0"/>
 <path d="M161 1007.2 h12.2 v3.5 l-5 5 v23 h-2 v-23 l-5.2 -5z" fill="#666"/>
 <!-- gear -->
 <g fill="#999">
  <circle cx="1180" cy="1022" r="5.8"/>
  <path d="M1180 1014 v16 M1172 1022 h16 M1174.3 1016.3 l11.4 11.4 M1185.7 1016.3 l-11.4 11.4" stroke="#999" stroke-width="2.8"/>
 </g>
 <circle cx="1180" cy="1022" r="2.6" fill="#f2f2f2"/>
</svg>
<!-- condensed labels -->
<svg style="left:0;top:0" width="1202" height="1048" viewBox="0 0 1202 1048" font-family="Liberation Sans">
 <text x="43.3" y="108" font-size="11" font-weight="700" fill="#333" textLength="37.5" lengthAdjust="spacingAndGlyphs">DESIGN</text>
 <g font-size="10.8" fill="#333" lengthAdjust="spacingAndGlyphs">
  <text x="236" y="139" textLength="39">CREATE</text>
  <text x="440.2" y="139" textLength="37.8">MODIFY</text>
  <text x="605.3" y="139" textLength="71.8" fill="#fff">CONSTRAINTS</text>
  <text x="774.5" y="139" textLength="41.5">INSPECT</text>
  <text x="887.2" y="139" textLength="34.3">INSERT</text>
  <text x="994.2" y="139" textLength="37.8">SELECT</text>
  <text x="1068.2" y="139" textLength="72.8">FINISH SKETCH</text>
 </g>
 <text x="972.5" y="285" font-size="11" fill="#555" textLength="85" lengthAdjust="spacingAndGlyphs">SKETCH PALETTE</text>
 <text x="30.2" y="984" font-size="11" fill="#555" textLength="56.5" lengthAdjust="spacingAndGlyphs">COMMENTS</text>
</svg>
</body></html>
